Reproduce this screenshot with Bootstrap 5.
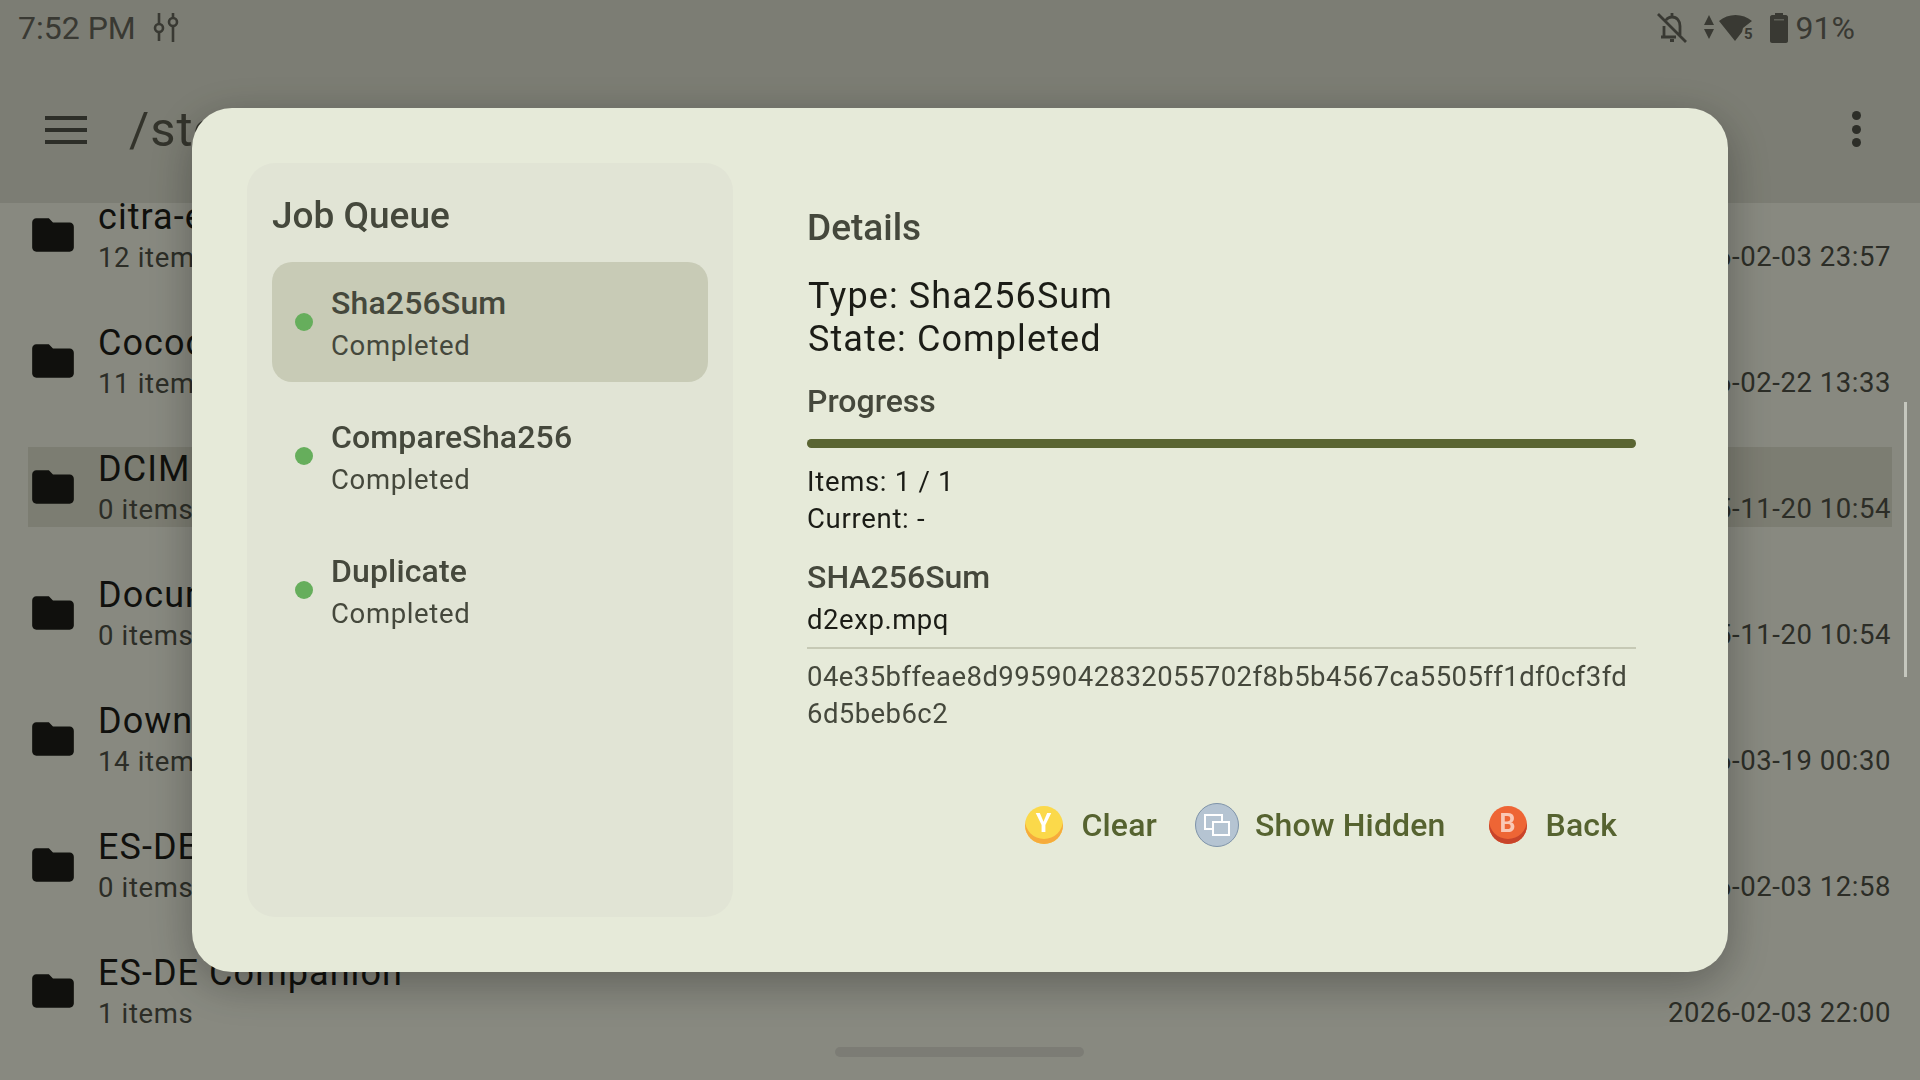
<!DOCTYPE html>
<html lang="en">
<head>
<meta charset="UTF-8">
<meta name="viewport" content="width=device-width, initial-scale=1.0">
<title>Job Queue</title>
<link href="https://cdn.jsdelivr.net/npm/bootstrap@5.3.0/dist/css/bootstrap.min.css" rel="stylesheet">
<style>
html, body { height: 100%; }
body { background: #e3e5d6; font-family: Roboto, "Liberation Sans", sans-serif; overflow: hidden; color: #1b1c16; }

/* app behind the dialog */
.app-top { height: 203px; background: #cfd1c1; color: #5a5c50; position: relative; z-index: 1; }
.status-bar { height: 56px; padding: 0 65px 0 18px; font-size: 32px; line-height: 56px; color: #5f6055; }
.title-bar { height: 147px; padding: 0 0 0 45px; }
.title-menu { margin-top: 60px; }
.path-text { font-size: 49px; line-height: 56px; letter-spacing: 1px; color: #555649; margin-left: 42px; margin-top: 46px; white-space: nowrap; }
.dots-btn { margin-left: auto; margin-right: 59px; margin-top: 55px; display: flex; flex-direction: column; gap: 4.5px; }
.dots-btn span { width: 9px; height: 9px; border-radius: 50%; background: #4c4d44; }
.file-list { height: 877px; overflow: hidden; padding: 0 28px; position: relative; }
.file-row { height: 80px; margin-bottom: 46px; }
.file-row:first-child { margin-top: -8px; }
.file-row.is-picked { background: #cfd0be; }
.file-name { font-size: 36px; line-height: 40px; letter-spacing: 1.05px; color: #1b1c16; white-space: nowrap; }
.file-sub { font-size: 27.5px; line-height: 32px; margin-top: 5px; color: #4a4c41; letter-spacing: .65px; }
.file-date { font-size: 27.5px; color: #4a4c41; margin-left: auto; margin-right: 1px; padding-top: 44px; letter-spacing: .55px; }
.file-icon { width: 50px; height: 50px; margin-right: 20px; color: #1b1c16; }
.home-bar { position: absolute; left: 835px; top: 1047px; width: 249px; height: 10px; border-radius: 5px; background: #cfcfc3; z-index: 2; }
.scroll-thumb { position: absolute; left: 1904px; top: 402px; width: 3px; height: 275px; background: #c5c7be; z-index: 6; }

/* dialog */
.scrim { background: rgba(0, 0, 0, .4); z-index: 5; }
.job-dialog { width: 1536px; height: 864px; background: #e6ead9; border-radius: 40px; padding: 55px 92px 55px 55px; box-shadow: 0 12px 46px rgba(0, 0, 0, .3); }
.queue-panel { width: 486px; background: #e1e4d5; border-radius: 28px; padding: 31px 25px; }
.queue-title { font-size: 37px; font-weight: 500; line-height: 44px; color: #45483c; margin-bottom: 24px; }
.job-row.list-group-item { height: 120px; background: transparent; border: 0; border-radius: 20px; padding: 3px 0 0 23px; margin-bottom: 14px; color: #45483c; }
.job-row.list-group-item.active { background: #c8cbb6; color: #45483c; }
.job-dot { width: 18px; height: 18px; border-radius: 50%; background: #66ae5c; margin-right: 18px; margin-top: -3px; flex: none; }
.job-name { font-size: 32px; font-weight: 500; line-height: 40px; letter-spacing: .15px; }
.job-state { font-size: 27.5px; line-height: 36px; margin-top: 5px; letter-spacing: .65px; }
.detail-pane { width: 829px; margin-left: 74px; padding-top: 43px; }
.detail-head { font-size: 37px; font-weight: 500; line-height: 44px; color: #45483c; }
.detail-main { font-size: 36px; line-height: 43px; margin-top: 25px; padding-left: 1px; color: #1b1c16; letter-spacing: 1.1px; }
.detail-sub { font-size: 32px; font-weight: 500; line-height: 40px; margin-top: 20px; color: #45483c; }
.job-progress.progress { height: 9px; margin-top: 18px; border-radius: 5px; background: #c6c9b5; }
.job-progress .progress-bar { background: #5a6532; }
.detail-lines { font-size: 27.5px; line-height: 37px; margin-top: 14.5px; color: #1b1c16; letter-spacing: .7px; }
.hash-title { font-size: 32px; font-weight: 500; line-height: 40px; margin-top: 20px; color: #45483c; }
.hash-file { font-size: 27.5px; line-height: 37px; margin-top: 4px; color: #1b1c16; letter-spacing: .55px; }
.hash-rule { height: 2px; background: #c6c9b5; margin-top: 9.5px; }
.hash-value { font-size: 27.5px; line-height: 37px; margin-top: 8.5px; color: #45483c; letter-spacing: .43px; word-break: break-all; }
.action-row { margin-top: 71.5px; padding-right: 19px; gap: 40px; }
.pad-action.btn { padding: 0; border: 0; font-size: 32px; font-weight: 500; line-height: 44px; letter-spacing: .15px; color: #566330; gap: 16px; }
.pad-action.btn:first-child { margin-right: -2px; }
.pad-slot { width: 44px; height: 44px; flex: none; }
.pad-key { width: 38px; height: 38px; border-radius: 50%; font-size: 25px; font-weight: 700; line-height: 36px; letter-spacing: 0; text-align: center; }
.key-y { background: #fbd94a; box-shadow: inset 0 -5px 0 #f6ab3c; color: #fff; }
.key-b { background: #ee6535; box-shadow: inset 0 -5px 0 #c8442a; color: #f9c8b6; }
</style>
</head>
<body>

<div class="app-top">
    <div class="status-bar d-flex align-items-center">
        <span>7:52 PM</span>
        <svg class="ms-3" width="30" height="30" viewBox="0 0 30 30" fill="none" stroke="currentColor" stroke-width="2.6">
            <path d="M7 0V11M7 19V28M21 0V5M21 13V29"/>
            <circle cx="7" cy="15" r="4"/>
            <circle cx="21" cy="9" r="4"/>
        </svg>
        <svg class="ms-auto" width="30" height="30" viewBox="0 0 30 30" fill="none" stroke="currentColor" stroke-width="2.8">
            <path d="M9 7C11 4.5 13 4 15 4C20 4 23 8 23 13V22M7 13V24M4 24H19M13 27.5h4M15 0V4M1 1L29 29"/>
        </svg>
        <svg class="ms-3" width="12" height="26" viewBox="0 0 12 26" fill="currentColor">
            <path d="M6 0L11 10H1ZM1 14H11L6 24Z"/>
        </svg>
        <svg class="ms-1" width="35" height="28" viewBox="0 0 35 28" fill="currentColor">
            <path d="M0 7C9 -1 24 -1 33 7L24 14L23 18L16 27Z"/>
            <text x="25" y="25" font-size="15" font-weight="700" font-family="Roboto, sans-serif">5</text>
        </svg>
        <svg class="ms-3" width="18" height="30" viewBox="0 0 18 30">
            <path fill="currentColor" d="M5 0H13V2H16C17 2 18 3 18 4V28C18 29 17 30 16 30H2C1 30 0 29 0 28V4C0 3 1 2 2 2H5Z"/>
            <rect x="4" y="6" width="10" height="1.5" fill="#9fa094"/>
        </svg>
        <span class="ms-2">91%</span>
    </div>
    <div class="title-bar d-flex align-items-start">
        <svg class="title-menu" width="42" height="28" viewBox="0 0 42 28" fill="#4c4d44">
            <rect width="42" height="4"/><rect y="12" width="42" height="4"/><rect y="24" width="42" height="4"/>
        </svg>
        <div class="path-text">/storage/emulated/0</div>
        <div class="dots-btn"><span></span><span></span><span></span></div>
    </div>
</div>

<div class="file-list" id="fileList"></div>
<div class="home-bar"></div>
<div class="scroll-thumb"></div>

<div class="scrim position-fixed top-0 start-0 w-100 h-100 d-flex align-items-center justify-content-center">
    <div class="job-dialog d-flex">
        <div class="queue-panel">
            <div class="queue-title">Job Queue</div>
            <div class="list-group">
                <a class="job-row list-group-item active d-flex align-items-center">
                    <span class="job-dot"></span>
                    <div><div class="job-name">Sha256Sum</div><div class="job-state">Completed</div></div>
                </a>
                <a class="job-row list-group-item d-flex align-items-center">
                    <span class="job-dot"></span>
                    <div><div class="job-name">CompareSha256</div><div class="job-state">Completed</div></div>
                </a>
                <a class="job-row list-group-item d-flex align-items-center">
                    <span class="job-dot"></span>
                    <div><div class="job-name">Duplicate</div><div class="job-state">Completed</div></div>
                </a>
            </div>
        </div>
        <div class="detail-pane">
            <div class="detail-head">Details</div>
            <div class="detail-main">Type: Sha256Sum<br>State: Completed</div>
            <div class="detail-sub">Progress</div>
            <div class="job-progress progress"><div class="progress-bar w-100"></div></div>
            <div class="detail-lines">Items: 1 / 1<br>Current: -</div>
            <div class="hash-title">SHA256Sum</div>
            <div class="hash-file">d2exp.mpq</div>
            <div class="hash-rule"></div>
            <div class="hash-value">04e35bffeae8d9959042832055702f8b5b4567ca5505ff1df0cf3fd6d5beb6c2</div>
            <div class="action-row d-flex justify-content-end">
                <button class="pad-action btn d-flex align-items-center">
                    <span class="pad-slot d-flex align-items-center justify-content-center"><span class="pad-key key-y">Y</span></span>Clear
                </button>
                <button class="pad-action btn d-flex align-items-center">
                    <svg class="pad-slot" viewBox="0 0 44 44">
                        <circle cx="22" cy="22" r="21.5" fill="#b5c4d2" stroke="#7e93a9"/>
                        <rect x="10" y="12" width="17" height="14" fill="none" stroke="#fff" stroke-width="2"/>
                        <rect x="18" y="19" width="16" height="13" fill="#b5c4d2" stroke="#fff" stroke-width="2"/>
                    </svg>Show Hidden
                </button>
                <button class="pad-action btn d-flex align-items-center">
                    <span class="pad-slot d-flex align-items-center justify-content-center"><span class="pad-key key-b">B</span></span>Back
                </button>
            </div>
        </div>
    </div>
</div>

<script>
    // filas de la lista de atras
    const files = [
        ['citra-emu', '12 items', '2026-02-03 23:57'],
        ['Cocoon', '11 items', '2026-02-22 13:33'],
        ['DCIM', '0 items', '2025-11-20 10:54', true],
        ['Documents', '0 items', '2025-11-20 10:54'],
        ['Download', '14 items', '2026-03-19 00:30'],
        ['ES-DE', '0 items', '2026-02-03 12:58'],
        ['ES-DE Companion', '1 items', '2026-02-03 22:00']
    ];
    document.getElementById('fileList').innerHTML = files.map(f => `
        <div class="file-row d-flex align-items-center ${f[3] ? 'is-picked' : ''}">
            <svg class="file-icon" viewBox="0 0 24 24" fill="currentColor"><path d="M10 4H4c-1.1 0-2 .9-2 2v12c0 1.1.9 2 2 2h16c1.1 0 2-.9 2-2V8c0-1.1-.9-2-2-2h-8l-2-2z"/></svg>
            <div class="file-text"><div class="file-name">${f[0]}</div><div class="file-sub">${f[1]}</div></div>
            <div class="file-date">${f[2]}</div>
        </div>`).join('');
</script>
<script src="https://cdn.jsdelivr.net/npm/bootstrap@5.3.0/dist/js/bootstrap.bundle.min.js"></script>
</body>
</html>
